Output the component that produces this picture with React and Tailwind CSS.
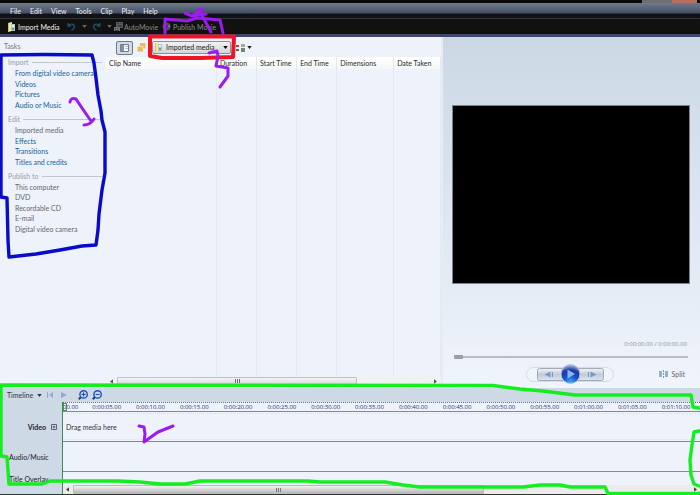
import React from 'react';

const menus = ['File', 'Edit', 'View', 'Tools', 'Clip', 'Play', 'Help'];

const tasks = [
  {
    title: 'Import',
    items: ['From digital video camera', 'Videos', 'Pictures', 'Audio or Music'],
  },
  {
    title: 'Edit',
    items: ['Imported media', 'Effects', 'Transitions', 'Titles and credits'],
    muted: ['Imported media'],
  },
  {
    title: 'Publish to',
    items: ['This computer', 'DVD', 'Recordable CD', 'E-mail', 'Digital video camera'],
    muted: ['This computer', 'DVD', 'Recordable CD', 'E-mail', 'Digital video camera'],
  },
];

const columns = [
  { label: 'Clip Name', width: 'w-[33%]' },
  { label: 'Duration', width: 'w-[12%]' },
  { label: 'Start Time', width: 'w-[12%]' },
  { label: 'End Time', width: 'w-[12%]' },
  { label: 'Dimensions', width: 'w-[17%]' },
  { label: 'Date Taken', width: 'w-[14%]' },
];

const ticks = [
  '0:00:05.00', '0:00:10.00', '0:00:15.00', '0:00:20.00', '0:00:25.00',
  '0:00:30.00', '0:00:35.00', '0:00:40.00', '0:00:45.00', '0:00:50.00',
  '0:00:55.00', '0:01:00.00', '0:01:05.00', '0:01:10.00',
];

const Caret = ({ className = '' }) => (
  <svg viewBox="0 0 6 4" className={`w-[5px] h-[3px] shrink-0 ${className}`} fill="currentColor" aria-hidden="true">
    <path d="M0 0h6L3 4z" />
  </svg>
);

const MediaIcon = () => (
  <svg viewBox="0 0 9 10" className="w-[9px] h-[10px] shrink-0" aria-hidden="true">
    <path d="M1 1l4-1v9l-4 1z" fill="#f7e6a0" />
    <path d="M1 1h1v9l-1-1z" fill="#e0bb5c" />
    <path d="M4 2h4v7H4z" fill="#a9c8cf" />
    <path d="M5 3h2v2H5z" fill="#e8f4f6" />
    <path d="M5 6h2v2H5z" fill="#6d9f83" />
  </svg>
);

const UndoIcon = ({ flip }) => (
  <svg viewBox="0 0 9 9" className={`w-[9px] h-[9px] shrink-0 ${flip ? '-scale-x-100' : ''}`} fill="none" stroke="#1f506b" strokeWidth="1.4" aria-hidden="true">
    <path d="M1.2 1v3h3M1.4 3.8C3 1.2 7.6 1.6 7.4 5c-.1 1.6-1.3 2.6-2.8 3" />
  </svg>
);

const AutoMovieIcon = () => (
  <svg viewBox="0 0 9 9" className="w-[9px] h-[9px] shrink-0" aria-hidden="true">
    <path d="M2 0h7v6H2z" fill="#565b5d" />
    <path d="M3 1h2v1H3zM6 1h2v1H6zM4 3h4v2H4z" fill="#3c4244" />
    <path d="M0 5h6v4H0z" fill="#6b7173" />
    <path d="M1 6h1v1H1zM3 6h1v1H3zM1 8h4v1H1z" fill="#3c4244" />
  </svg>
);

const PublishIcon = () => (
  <svg viewBox="0 0 9 9" className="w-[9px] h-[9px] shrink-0" aria-hidden="true">
    <circle cx="4.5" cy="4.5" r="4" fill="#4d4d55" />
    <circle cx="4.5" cy="4.5" r="1.4" fill="#1a1a1c" />
    <path d="M4.5 4.5L8 2.5v3z" fill="#77777f" />
  </svg>
);

const MenuBar = () => (
  <nav className="flex gap-[9px] px-[10px] h-[15px] bg-linear-to-b from-[#6f7990] via-[#485165] via-65% to-[#101216] to-75% text-[7px] leading-[14px] text-[#eceef3]">
    {menus.map((m) => (
      <button key={m} type="button">{m}</button>
    ))}
  </nav>
);

const Toolbar = () => (
  <div className="flex items-center h-[19px] px-[7px] border-t border-t-[#33373c] border-b-3 border-b-[#42456a] bg-[#111210] text-[7px] leading-[10px] text-[#8a8a8a]">
    <button type="button" className="flex items-center gap-[2px] w-[60px] text-[#f0f0f0]"><MediaIcon />Import Media</button>
    <button type="button" aria-label="Undo" className="flex items-center gap-[6px] w-[25px] text-[#666]"><UndoIcon /><Caret /></button>
    <button type="button" aria-label="Redo" className="flex items-center gap-[6px] w-[22px] text-[#666]"><UndoIcon flip /><Caret /></button>
    <button type="button" className="flex items-center gap-px w-[48px]"><AutoMovieIcon />AutoMovie</button>
    <button type="button" className="flex items-center gap-[2px]"><PublishIcon />Publish Movie</button>
  </div>
);

const Tasks = () => (
  <aside className="w-[106px] shrink-0 text-[7px] leading-[10px]">
    <h2 className="pl-[4px] pt-[4px] h-[20px] text-[#77797d]">Tasks</h2>
    <div className="flex flex-col gap-[4px]">
      {tasks.map((group) => (
        <section key={group.title} className="flex flex-col gap-px">
          <h3 className="flex items-center gap-[3px] pl-[8px] pr-[4px] text-[#9c9ea3]">
            {group.title}
            <span className="flex-1 border-t border-[#c3c6cb]" />
          </h3>
          <ul className={`grid pl-[15px] whitespace-nowrap ${group.items.length > 4 ? 'h-[52px]' : 'h-[42px]'}`}>
            {group.items.map((item) => (
              <li key={item}>
                <a href="#" className={group.muted?.includes(item) ? 'text-[#66686c]' : 'text-[#1a6296]'}>{item}</a>
              </li>
            ))}
          </ul>
        </section>
      ))}
    </div>
  </aside>
);

const MediaToolbar = () => (
  <div className="flex items-center h-[20px] pl-[10px] pt-px">
    <button type="button" aria-label="Toggle tasks" className="flex items-center justify-center w-[17px] h-[14px] rounded-[2px] border border-[#737a85] bg-[#d3dae4]">
      <svg viewBox="0 0 9 8" className="w-[9px] h-[8px]" aria-hidden="true">
        <path d="M.5.5h8v7h-8z" fill="#f4f8fc" stroke="#6c7f96" />
        <path d="M1 1h3v6H1z" fill="#7b94b0" />
        <path d="M5 2h3v1H5zM5 4h3v1H5z" fill="#b3c0cf" />
      </svg>
    </button>
    <button type="button" aria-label="Collections" className="ml-[4px] w-[9px] h-[9px]">
      <svg viewBox="0 0 9 9" className="block w-[9px] h-[9px]" aria-hidden="true">
        <path d="M3 0h5.500v5.500H6V8.500H.5V3.500H3z" fill="#e8bd55" />
        <path d="M3 3.500h3V6" fill="none" stroke="#f8e0a0" />
      </svg>
    </button>
    <div className="relative ml-[6px] w-[79px] h-[13px]">
      <select aria-label="Collection" className="appearance-none block w-full h-full pl-[13px] rounded-[2px] border border-[#8b8e94] bg-linear-to-b from-[#f2f2f3] to-[#d3d5d9] text-[7px] leading-[11px] text-[#1c1c1e]">
        <option>Imported media</option>
      </select>
      <span className="absolute left-[2px] top-px pointer-events-none flex"><MediaIcon /></span>
      <span className="absolute right-[3px] top-[5px] pointer-events-none flex text-black"><Caret /></span>
    </div>
    <button type="button" aria-label="View" className="flex items-center gap-[2px] ml-[5px] text-[#222]">
      <svg viewBox="0 0 9 8" className="w-[9px] h-[8px]" aria-hidden="true">
        <path d="M0 1h3v2H0z" fill="#b5473a" />
        <path d="M0 5h3v2H0z" fill="#5a6a52" />
        <path d="M5 0h4v3H5z" fill="#9bb08f" />
        <path d="M5 4h4v4H5z" fill="#6f8a74" />
      </svg>
      <Caret />
    </button>
  </div>
);

const Clips = () => (
  <section className="flex-1 flex flex-col min-w-0 text-[7px] leading-[10px]">
    <MediaToolbar />
    <table className="flex-1 w-full table-fixed border-collapse">
      <thead>
        <tr className="h-[12px] bg-linear-to-b from-white to-[#f6f6f7]">
          {columns.map((c) => (
            <th key={c.label} className={`${c.width} p-0 pl-[3px] border-r border-r-[#e3e7ee] text-left font-normal whitespace-nowrap text-[#2c2c2e]`}>{c.label}</th>
          ))}
        </tr>
      </thead>
      <tbody>
        <tr>
          {columns.map((c) => (
            <td key={c.label} className="p-0 border-r border-r-[#e2eaf5]" />
          ))}
        </tr>
      </tbody>
    </table>
    <div className="flex items-center h-[8px] mb-[3px] px-[3px] bg-[#f0f1f3] text-[#555]">
      <Caret className="rotate-90" />
      <span className="ml-[3px] w-[73%] h-full rounded-[1px] border border-[#bfc1c5] bg-linear-to-b from-[#f4f4f4] to-[#d8dadd] flex items-center justify-center gap-px">
        <i className="w-px h-[4px] bg-[#6d6f73]" /><i className="w-px h-[4px] bg-[#6d6f73]" /><i className="w-px h-[4px] bg-[#6d6f73]" />
      </span>
      <Caret className="ml-auto -rotate-90" />
    </div>
  </section>
);

const Transport = () => (
  <svg viewBox="0 0 90 22" className="block w-[90px] h-[22px]" aria-hidden="true">
    <defs>
      <linearGradient id="pill" x2="0" y2="1">
        <stop offset="0" stopColor="#f2f5f9" />
        <stop offset=".5" stopColor="#c3cbd6" />
        <stop offset="1" stopColor="#dfe5ee" />
      </linearGradient>
      <radialGradient id="orb" cx=".5" cy=".95" r=".95">
        <stop offset="0" stopColor="#42b4f5" />
        <stop offset=".4" stopColor="#1450c8" />
        <stop offset=".7" stopColor="#1c3aa6" />
        <stop offset="1" stopColor="#b9c5ea" />
      </radialGradient>
    </defs>
    <rect x="1.500" y="4.500" width="87" height="14" rx="7" fill="#f0f4fb" stroke="#d5dbe6" />
    <rect x="12.500" y="5.500" width="66" height="12" rx="2" fill="url(#pill)" stroke="#a3abb8" />
    <path d="M25.500 8.500v6l-6-3zM27 9v5h1V9z" fill="#6f9bd0" />
    <path d="M65.500 8.500v6l6-3zM63 9v5h1V9z" fill="#6f9bd0" />
    <circle cx="45.500" cy="11" r="9.500" fill="url(#orb)" stroke="#b9c6e2" />
    <path d="M42.500 6.500v9l7.500-4.500z" fill="#8db9f2" />
  </svg>
);

const Preview = () => (
  <section className="w-[37%] shrink-0 flex flex-col pl-[9px] pr-[10px] border-l-2 border-[#e8ebf1] bg-linear-to-b from-[#cbd8e4] via-[#dde6f1] via-50% to-[#f0f4fc] text-[7px] leading-[10px]">
    <div className="mt-[68px] h-[179px] border border-[#7d8388] bg-black" />
    <div className="mt-auto pr-[3px] text-right text-[6px] font-['Open_Sans',sans-serif] text-[#8d8f94]">0:00:00.00 / 0:00:00.00</div>
    <input
      type="range"
      aria-label="Seek"
      min="0"
      max="100"
      defaultValue="0"
      className="appearance-none block mt-[5px] ml-[2px] mr-[2px] h-[5px] bg-transparent [&::-webkit-slider-runnable-track]:h-[2px] [&::-webkit-slider-runnable-track]:bg-[#babcc0] [&::-webkit-slider-thumb]:appearance-none [&::-webkit-slider-thumb]:w-[9px] [&::-webkit-slider-thumb]:h-[4px] [&::-webkit-slider-thumb]:-mt-px [&::-webkit-slider-thumb]:rounded-[1px] [&::-webkit-slider-thumb]:bg-[#9c9ea1]"
    />
    <div className="flex items-center justify-between mt-[4px] mb-[3px] pl-[73px] pr-[5px]">
      <button type="button" aria-label="Play"><Transport /></button>
      <button type="button" className="flex items-center gap-[4px] text-[#66686c]">
        <svg viewBox="0 0 9 8" className="w-[9px] h-[8px]" aria-hidden="true">
          <path d="M0 1h3v6H0zM6 1h3v6H6z" fill="#8fb0d8" />
          <path d="M4 0h1v2H4zM4 3h1v2H4zM4 6h1v2H4z" fill="#8a94a5" />
        </svg>
        Split
      </button>
    </div>
  </section>
);

const ZoomIcon = ({ plus }) => (
  <svg viewBox="0 0 10 10" className="block w-[10px] h-[10px]" fill="none" aria-hidden="true">
    <path d="M3.200 6.800L.8 9.200" stroke="#1d3f9c" strokeWidth="2" />
    <circle cx="5.600" cy="4.400" r="3.700" fill="#c3dcf8" stroke="#1f4fb4" strokeWidth="1.400" />
    <path d={plus ? 'M3.600 4.400h4M5.600 2.400v4' : 'M3.600 4.400h4'} stroke="#1d3f9c" />
  </svg>
);

const Timeline = () => (
  <section className="bg-[#cdd9e4] text-[7px] leading-[10px] text-[#1d2026]">
    <div className="flex items-center h-[14px] pl-[7px]">
      <button type="button" className="flex items-center justify-between w-[35px] mr-[5px] text-[#33363c]">Timeline<Caret /></button>
      <button type="button" aria-label="Rewind" className="w-[14px] text-[#94aad4]">
        <svg viewBox="0 0 7 6" className="w-[7px] h-[6px]" fill="currentColor"><path d="M0 0h1v6H0zM6 0v6L2 3z" /></svg>
      </button>
      <button type="button" aria-label="Play timeline" className="w-[17px] text-[#94aad4]">
        <svg viewBox="0 0 6 6" className="w-[6px] h-[6px]" fill="currentColor"><path d="M0 0l6 3-6 3z" /></svg>
      </button>
      <button type="button" aria-label="Zoom in" className="w-[14px]"><ZoomIcon plus /></button>
      <button type="button" aria-label="Zoom out"><ZoomIcon /></button>
    </div>
    <div className="flex">
      <div className="w-[62px] shrink-0 flex flex-col pt-[10px]">
        <div className="flex items-center justify-end gap-[5px] h-[30px] pr-[5px] font-bold">
          Video
          <button type="button" aria-label="Expand video" className="w-[6px] h-[6px]">
            <svg viewBox="0 0 6 6" className="block w-[6px] h-[6px]" fill="none" stroke="#444b55"><path d="M.5.5h5v5h-5zM1.500 3h3M3 1.500v3" strokeWidth=".8" /></svg>
          </button>
        </div>
        <div className="flex items-center h-[30px] pl-[9px]">Audio/Music</div>
        <div className="flex items-center h-[13px] pl-[9px]">Title Overlay</div>
      </div>
      <div className="relative flex-1 min-w-0 border-l border-[#3f8a4e] bg-[#eef2fb]">
        {/* playhead handle */}
        <span className="absolute left-0 top-px w-[4px] h-[8px] border border-[#3f9a50]" />
        <div className="border-t border-dotted border-[#6d737c]">
          <div className="h-[9px] border-b border-[#85898f]">
            <div className="grid grid-cols-15 -ml-[22px] mr-[2px] text-center text-[6px] leading-[8px] font-['Open_Sans',sans-serif] text-[#2b3270]">
              <span className="pl-[22px] text-left">00.00</span>
              {ticks.map((t) => <span key={t}>{t}</span>)}
            </div>
          </div>
        </div>
        <div className="h-[30px] py-px border-b border-[#85898f]">
          <div className="flex items-center h-full pl-[3px] border-y border-dotted border-[#dde1e8] text-[#33363c]">Drag media here</div>
        </div>
        <div className="h-[30px] border-b border-[#85898f]" />
        <div className="h-[13px]" />
        <div className="flex items-center h-[9px] px-[2px] bg-[#ececec] text-[#444]">
          <Caret className="rotate-90" />
          <span className="ml-[3px] w-[65%] mr-auto h-full rounded-[1px] border border-[#b9bbbd] bg-linear-to-b from-[#f2f2f2] to-[#b9b9bb] flex items-center justify-center gap-px">
            <i className="w-px h-[4px] bg-[#77797c]" /><i className="w-px h-[4px] bg-[#77797c]" /><i className="w-px h-[4px] bg-[#77797c]" />
          </span>
          <Caret className="-rotate-90" />
        </div>
      </div>
    </div>
    <div className="h-px bg-[#333]" />
  </section>
);

// hand-drawn marker strokes over the whole window
const Markers = () => (
  <svg viewBox="0 0 700 495" preserveAspectRatio="none" className="absolute inset-0 w-full h-full pointer-events-none" fill="none" strokeLinecap="round" strokeLinejoin="round" aria-hidden="true">
    <g stroke="#0a0acb" strokeWidth="3.400">
      <path d="M1 55L44 54.500L92 55L94 63L96 78L98 95L101 111L102 120L105 132L105 145L105 173L102 190L99 214L98 230L96 245L82 246L60 250L36 254L9 257L8 240L7 198L1 197L1 130Z" />
    </g>
    <g stroke="#ef1424" strokeWidth="4">
      <path d="M150 36.500H234L233 57L200 58L162 58L150 56Z" />
    </g>
    <g stroke="#9b1bf0" strokeWidth="3">
      <path d="M165 33L165 19L187 21L197 18L220 20L223 33" />
      <path d="M185 13L192 16L203 9M192 16L206 14M199 9L204 19L211 32" />
      <path d="M209 53L217 51L218 56L216 66L228 68L228 76L220 87" />
      <path d="M70 102Q71 97 76 99L82 108L91 121M84 125Q90 125 94 119" />
      <path d="M139 426L144 427L145 434L144 442L158 432L173 426" />
    </g>
    <g stroke="#14ee20" strokeWidth="3.400">
      <path d="M1 385L493 385.500L520 389L543 391L575 395H691L693 407L699 408M699 431L694 432L692 445L690 460L691 475L694 484L699 486M699 493.500L608 493.500L605 487L570 487L560 485L540 485L523 487H420L403 485L385 482L320 482L308 481L200 481L185 484L160 484L140 482L118 481L50 481L42 484L9 484L7 457L1 456L1 385" />
    </g>
  </svg>
);

const App = () => (
  <div className="relative min-h-screen flex flex-col overflow-hidden bg-[#edf2fb] font-['Lato','Open_Sans',sans-serif]">
    <div className="flex justify-end h-[3px] pr-[3px] bg-[#0c0a09]">
      <span className="w-[30px] bg-[#6f6f70]" />
      <span className="w-[25px] bg-[#b8705c]" />
    </div>
    <MenuBar />
    <Toolbar />
    <main className="flex-1 flex">
      <Tasks />
      <Clips />
      <Preview />
    </main>
    <Timeline />
    <Markers />
  </div>
);

export default App;
